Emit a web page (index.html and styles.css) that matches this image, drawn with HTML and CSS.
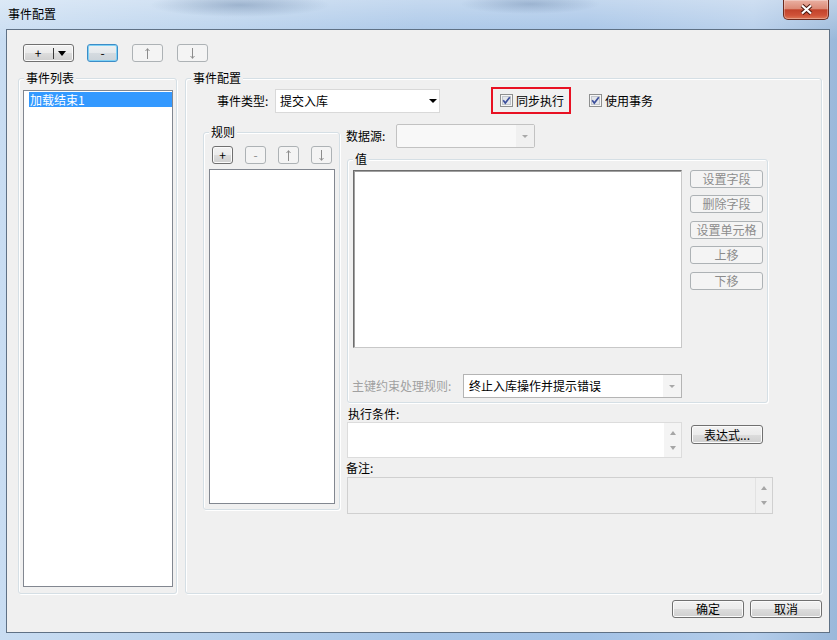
FILE: index.html
```html
<!DOCTYPE html>
<html lang="zh-CN">

<head>
    <meta charset="UTF-8">
    <title>事件配置</title>
    <link rel="stylesheet" href="styles.css">
</head>

<body>
    <div class="window">
        <!-- 标题栏 -->
        <div class="titlebar">
            <span class="title">事件配置</span>
            <a class="close-btn" href="javascript:;">
                <svg width="13" height="11" viewBox="0 0 13 11">
                    <path d="M2 1.5 L11 9.5 M11 1.5 L2 9.5" fill="none" stroke="#4d1a10" stroke-width="4.2"/>
                    <path d="M2 1.5 L11 9.5 M11 1.5 L2 9.5" fill="none" stroke="#fff" stroke-width="2.2"/>
                </svg>
            </a>
        </div>

        <div class="client">
            <!-- 顶部工具条 -->
            <div class="toolbar">
                <button class="btn btn-split"><span class="plus">+</span><i class="split-line"></i><i class="tri tri-black"></i></button>
                <button class="btn btn-focus">-</button>
                <button class="btn" disabled>
                    <svg width="5" height="11" viewBox="0 0 5 11"><path d="M2.5 0.5 V11 M0.5 3 L2.5 0.8 L4.5 3" fill="none" stroke="currentColor"/></svg>
                </button>
                <button class="btn" disabled>
                    <svg width="5" height="11" viewBox="0 0 5 11"><path d="M2.5 0 V10.5 M0.5 8 L2.5 10.2 L4.5 8" fill="none" stroke="currentColor"/></svg>
                </button>
            </div>

            <div class="main">
                <!-- 事件列表 -->
                <div class="group list-group">
                    <span class="group-title">事件列表</span>
                    <div class="listbox">
                        <div class="list-item selected">加载结束1</div>
                    </div>
                </div>

                <!-- 事件配置 -->
                <div class="group config-group">
                    <span class="group-title">事件配置</span>
                    <div class="type-row">
                        <label class="type-label">事件类型:</label>
                        <div class="combo type-combo">
                            <span class="combo-text">提交入库</span>
                            <span class="combo-btn"><i class="tri tri-small"></i></span>
                        </div>
                        <label class="check sync-check">
                            <svg width="13" height="13" viewBox="0 0 13 13">
                                <rect x="0.5" y="0.5" width="12" height="12" fill="#f6f6f6" stroke="#8e8f8f"/>
                                <rect x="2.5" y="2.5" width="8" height="8" fill="#e4e6ea" stroke="#c2c6cc"/>
                                <path d="M3.2 6.3 L5.3 9 L9.8 3.2" fill="none" stroke="#3c4f9c" stroke-width="1.7"/>
                            </svg>
                            同步执行
                        </label>
                        <label class="check tx-check">
                            <svg width="13" height="13" viewBox="0 0 13 13">
                                <rect x="0.5" y="0.5" width="12" height="12" fill="#f6f6f6" stroke="#8e8f8f"/>
                                <rect x="2.5" y="2.5" width="8" height="8" fill="#e4e6ea" stroke="#c2c6cc"/>
                                <path d="M3.2 6.3 L5.3 9 L9.8 3.2" fill="none" stroke="#3c4f9c" stroke-width="1.7"/>
                            </svg>
                            使用事务
                        </label>
                    </div>

                    <div class="config-body">
                        <!-- 规则 -->
                        <div class="group rules-group">
                            <span class="group-title">规则</span>
                            <div class="rules-tools">
                                <button class="btn">+</button>
                                <button class="btn" disabled>-</button>
                                <button class="btn" disabled>
                                    <svg width="5" height="11" viewBox="0 0 5 11"><path d="M2.5 0.5 V11 M0.5 3 L2.5 0.8 L4.5 3" fill="none" stroke="currentColor"/></svg>
                                </button>
                                <button class="btn" disabled>
                                    <svg width="5" height="11" viewBox="0 0 5 11"><path d="M2.5 0 V10.5 M0.5 8 L2.5 10.2 L4.5 8" fill="none" stroke="currentColor"/></svg>
                                </button>
                            </div>
                            <div class="listbox rules-list"></div>
                        </div>

                        <div class="right-col">
                            <div class="ds-row">
                                <label class="ds-label">数据源:</label>
                                <div class="combo combo-off ds-combo">
                                    <span class="combo-text"></span>
                                    <span class="combo-btn"><i class="tri tri-gray"></i></span>
                                </div>
                            </div>

                            <!-- 值 -->
                            <div class="group value-group">
                                <span class="group-title">值</span>
                                <div class="value-main">
                                    <div class="value-area"></div>
                                    <div class="value-btns">
                                        <button class="btn" disabled>设置字段</button>
                                        <button class="btn" disabled>删除字段</button>
                                        <button class="btn" disabled>设置单元格</button>
                                        <button class="btn" disabled>上移</button>
                                        <button class="btn" disabled>下移</button>
                                    </div>
                                </div>
                                <div class="pk-row">
                                    <label class="pk-label">主键约束处理规则:</label>
                                    <div class="combo pk-combo">
                                        <span class="combo-text">终止入库操作并提示错误</span>
                                        <span class="combo-btn"><i class="tri tri-gray"></i></span>
                                    </div>
                                </div>
                            </div>

                            <div class="cond-label">执行条件:</div>
                            <div class="cond-row">
                                <div class="text-field cond-area">
                                    <div class="field-body"></div>
                                    <div class="scroll-strip"><i class="arr-up"></i><i class="arr-down"></i></div>
                                </div>
                                <button class="btn expr-btn">表达式...</button>
                            </div>

                            <div class="note-label">备注:</div>
                            <div class="text-field field-off note-area">
                                <div class="field-body"></div>
                                <div class="scroll-strip"><i class="arr-up"></i><i class="arr-down"></i></div>
                            </div>
                        </div>
                    </div>
                </div>
            </div>

            <!-- 确定 取消 -->
            <div class="footer">
                <button class="btn">确定</button>
                <button class="btn">取消</button>
            </div>
        </div>
    </div>
</body>

</html>
```

FILE: styles.css
```css
* {
    margin: 0;
    padding: 0;
    box-sizing: border-box;
}

body {
    font-family: "Noto Sans CJK SC", "Liberation Sans", sans-serif;
    font-size: 12px;
    line-height: 14px;
    color: #000;
    background: #fff;
}

button {
    font: inherit;
    color: inherit;
}

i {
    display: block;
}

/* 整个窗口 (Aero 玻璃边框) */
.window {
    width: 837px;
    height: 640px;
    display: flex;
    flex-direction: column;
    background:
        radial-gradient(ellipse 90px 12px at 240px 5px, rgba(70, 100, 140, .35), rgba(70, 100, 140, 0)),
        radial-gradient(ellipse 70px 10px at 530px 4px, rgba(70, 100, 140, .3), rgba(70, 100, 140, 0)),
        linear-gradient(180deg, rgba(255, 255, 255, .35), rgba(255, 255, 255, 0) 40px),
        linear-gradient(90deg, #c9ddf2 0%, #b8d1ec 25%, #a7c5e7 50%, #a3c2e6 70%, #b4cdea 90%, #9ab8da 100%);
}

.titlebar {
    height: 29px;
    display: flex;
    align-items: flex-start;
    padding-left: 8px;
}

.title {
    margin-top: 7px;
}

.close-btn {
    margin-left: auto;
    margin-right: 8px;
    width: 46px;
    height: 20px;
    display: flex;
    align-items: center;
    justify-content: center;
    border: 1px solid #6b2a1e;
    border-top: none;
    border-radius: 0 0 5px 5px;
    background: linear-gradient(#eab0a2, #dc8b77 45%, #c2432b 52%, #cf5238 80%, #de7856);
    box-shadow: inset 0 0 0 1px rgba(255, 255, 255, .3);
}

/* 客户区 */
.client {
    flex: 1;
    display: flex;
    flex-direction: column;
    margin: 0 7px 7px 6px;
    padding: 0 7px 0 11px;
    border: 1px solid #5f7185;
    background: #f0f0f0;
}

/* 按钮 */
.btn {
    height: 18px;
    display: flex;
    align-items: center;
    justify-content: center;
    border: 1px solid #707070;
    border-radius: 3px;
    background: linear-gradient(#f2f2f2, #ebebeb 50%, #dddddd 50%, #cfcfcf);
    box-shadow: inset 0 0 0 1px #fbfbfb;
    line-height: 14px;
}

.btn:disabled {
    border-color: #adb2b5;
    background: #f4f4f4;
    box-shadow: none;
    color: #8c8c8c;
}

.toolbar {
    display: flex;
    padding: 14px 0 0 5px;
}

.toolbar .btn {
    width: 31px;
    margin-left: 14px;
}

.toolbar .btn-split {
    width: 51px;
    margin-left: 0;
    justify-content: flex-start;
    padding-left: 10px;
}

.toolbar .btn-focus {
    margin-left: 13px;
    border-color: #3c8dc8;
    box-shadow: inset 0 0 0 1px #7fd1f5;
    background: linear-gradient(#eef1f3, #e4e8eb 50%, #d5dbe0 50%, #cbd3d9);
}

.plus {
    width: 8px;
    text-align: center;
}

.split-line {
    width: 1px;
    height: 11px;
    margin-left: 11px;
    background: #3a3a3a;
}

.tri {
    width: 0;
    height: 0;
    border-left: 4px solid transparent;
    border-right: 4px solid transparent;
    border-top: 4px solid #000;
}

.tri-black {
    margin-left: 4px;
    border-left-width: 4.5px;
    border-right-width: 4.5px;
    border-top-width: 5px;
}

.tri-gray {
    border-left-width: 3.5px;
    border-right-width: 3.5px;
    border-top: 3px solid #a8a8a8;
}

.main {
    display: flex;
    gap: 8px;
    height: 516px;
    margin-top: 16px;
}

/* 分组框 */
.group {
    display: flex;
    flex-direction: column;
    border: 1px solid #d5dfe5;
    border-radius: 3px;
    box-shadow: inset 1px 1px 0 #fff, 1px 1px 0 #fff;
}

.group-title {
    align-self: flex-start;
    margin: -8px 0 0 5px;
    padding: 0 2px;
    background: #f0f0f0;
}

.listbox {
    border: 1px solid #828790;
    background: #fff;
}

.list-group {
    width: 159px;
}

.list-group .listbox {
    flex: 1;
    margin: 5px 3px 6px 4px;
}

.list-item {
    height: 15px;
    margin: 1px 0 0 5px;
    padding-left: 1px;
    line-height: 15px;
}

.list-item.selected {
    background: #3399ff;
    color: #fff;
}

.config-group {
    width: 637px;
}

.type-row {
    display: flex;
    align-items: center;
    height: 27px;
    margin-top: 2px;
    padding-left: 31px;
}

.type-label {
    width: 53px;
}

/* 下拉框 */
.combo {
    display: flex;
    border: 1px solid #d9d9d9;
    background: #fff;
}

.combo-text {
    flex: 1;
    padding-left: 4px;
    line-height: 22px;
}

.combo-btn {
    width: 18px;
    display: flex;
    align-items: center;
    justify-content: center;
    background: #f4f4f4;
}

.type-combo {
    width: 165px;
    height: 24px;
    margin-left: 5px;
}

.type-combo .combo-btn {
    width: 13px;
    background: #fff;
}

.check {
    display: flex;
    align-items: center;
}

.check svg {
    margin-right: 3px;
}

.sync-check {
    width: 80px;
    height: 27px;
    margin-left: 51px;
    padding-left: 7px;
    border: 2px solid #e81123;
}

.tx-check {
    margin-left: 18px;
}

.config-body {
    display: flex;
    align-items: flex-start;
    margin-top: 10px;
    padding-left: 17px;
}

.rules-group {
    width: 137px;
    margin-top: 8px;
}

.rules-tools {
    display: flex;
    gap: 12px;
    margin: 7px 0 0 8px;
}

.rules-tools .btn {
    width: 21px;
}

.rules-list {
    width: 126px;
    height: 335px;
    margin: 5px 0 5px 5px;
}

.right-col {
    width: 426px;
    margin-left: 7px;
}

.ds-row {
    display: flex;
    align-items: center;
    height: 24px;
}

.ds-label {
    width: 50px;
    margin-left: -1px;
}

.combo-off {
    border-color: #c2c2c2;
    border-radius: 2px;
    background: #f8f8f8;
}

.combo-off .combo-btn {
    background: #f0f0f0;
}

.ds-combo {
    width: 139px;
    height: 24px;
}

.value-group {
    width: 421px;
    margin-top: 11px;
}

.value-main {
    display: flex;
    margin: 4px 0 0 5px;
}

.value-area {
    width: 329px;
    height: 178px;
    border: 1px solid;
    border-color: #6d6d6d #c8c8c8 #c8c8c8 #6d6d6d;
    box-shadow: inset 1px 1px 0 #a0a0a0;
    background: #fff;
}

.value-btns {
    display: flex;
    flex-direction: column;
    margin-left: 8px;
}

.value-btns .btn {
    width: 73px;
    margin-top: 7px;
}

.value-btns .btn:first-child {
    margin-top: 0;
}

.value-btns .btn:nth-child(3),
.value-btns .btn:nth-child(5) {
    margin-top: 8px;
}

.pk-row {
    display: flex;
    align-items: center;
    height: 24px;
    margin: 26px 0 4px;
    padding-left: 4px;
}

.pk-label {
    width: 111px;
    color: #a0a0a0;
}

.pk-combo {
    width: 219px;
    height: 24px;
    border-color: #b4b4b4;
}

.pk-combo .combo-text {
    padding-left: 5px;
}

.cond-label {
    margin-top: 4px;
    padding-left: 1px;
}

.cond-row {
    display: flex;
    align-items: flex-start;
    margin-top: 1px;
}

/* 带滚动条的文本框 */
.text-field {
    display: flex;
    border: 1px solid #dcdcdc;
    background: #fff;
}

.field-body {
    flex: 1;
}

.scroll-strip {
    width: 17px;
    display: flex;
    flex-direction: column;
    align-items: center;
    justify-content: center;
    gap: 11px;
    background: #f4f4f4;
}

.arr-up,
.arr-down {
    width: 0;
    height: 0;
    border-left: 3.5px solid transparent;
    border-right: 3.5px solid transparent;
}

.arr-up {
    border-bottom: 4px solid #a6a6a6;
}

.arr-down {
    border-top: 4px solid #a6a6a6;
}

.cond-area {
    width: 335px;
    height: 36px;
}

.expr-btn {
    width: 72px;
    height: 19px;
    margin: 3px 0 0 9px;
}

.note-label {
    margin: 3px 0 0 -1px;
}

.field-off {
    border-color: #d0d0d0;
    background: #f0f0f0;
}

.field-off .scroll-strip {
    border-left: 1px solid #e2e2e2;
    background: #f0f0f0;
}

.note-area {
    width: 426px;
    height: 37px;
    margin-top: 2px;
}

.footer {
    display: flex;
    justify-content: flex-end;
    gap: 6px;
    padding-top: 6px;
}

.footer .btn {
    width: 72px;
}
```
